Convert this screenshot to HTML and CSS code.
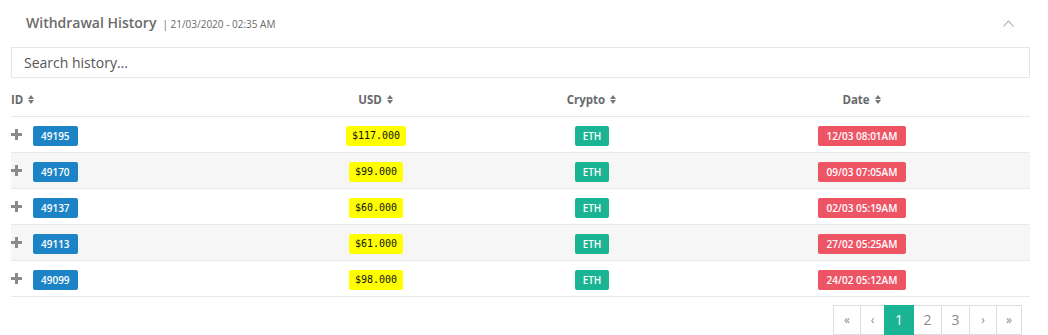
FILE: index.html
```html
<!DOCTYPE html>
<html>
<head>
<meta charset="utf-8">
<link rel="stylesheet" href="styles.css">
</head>
<body>
<div class="ibox">
  <div class="ibox-title">
    <h5>Withdrawal History</h5>
    <small>| 21/03/2020 - 02:35 AM</small>
    <span class="collapse">
      <svg width="11" height="7" viewBox="0 0 11 7"><polyline points="0.5,6.5 5.5,1 10.5,6.5" fill="none" stroke="#a8a8a8" stroke-width="1.1"/></svg>
    </span>
  </div>
  <div class="ibox-content">
    <input class="search" type="text" placeholder="Search history...">
    <div class="table">
      <div class="row head">
        <div class="cell c-id">ID <span class="sort"></span></div>
        <div class="cell c-mid">USD <span class="sort"></span></div>
        <div class="cell c-mid">Crypto <span class="sort"></span></div>
        <div class="cell c-mid">Date <span class="sort"></span></div>
      </div>
      <div class="row">
        <div class="cell c-id"><span class="plus"></span><span class="badge b-blue">49195</span></div>
        <div class="cell c-mid"><span class="badge b-yellow">$117.000</span></div>
        <div class="cell c-mid"><span class="badge b-green">ETH</span></div>
        <div class="cell c-mid"><span class="badge b-red">12/03 08:01AM</span></div>
      </div>
      <div class="row striped">
        <div class="cell c-id"><span class="plus"></span><span class="badge b-blue">49170</span></div>
        <div class="cell c-mid"><span class="badge b-yellow">$99.000</span></div>
        <div class="cell c-mid"><span class="badge b-green">ETH</span></div>
        <div class="cell c-mid"><span class="badge b-red">09/03 07:05AM</span></div>
      </div>
      <div class="row">
        <div class="cell c-id"><span class="plus"></span><span class="badge b-blue">49137</span></div>
        <div class="cell c-mid"><span class="badge b-yellow">$60.000</span></div>
        <div class="cell c-mid"><span class="badge b-green">ETH</span></div>
        <div class="cell c-mid"><span class="badge b-red">02/03 05:19AM</span></div>
      </div>
      <div class="row striped">
        <div class="cell c-id"><span class="plus"></span><span class="badge b-blue">49113</span></div>
        <div class="cell c-mid"><span class="badge b-yellow">$61.000</span></div>
        <div class="cell c-mid"><span class="badge b-green">ETH</span></div>
        <div class="cell c-mid"><span class="badge b-red">27/02 05:25AM</span></div>
      </div>
      <div class="row">
        <div class="cell c-id"><span class="plus"></span><span class="badge b-blue">49099</span></div>
        <div class="cell c-mid"><span class="badge b-yellow">$98.000</span></div>
        <div class="cell c-mid"><span class="badge b-green">ETH</span></div>
        <div class="cell c-mid"><span class="badge b-red">24/02 05:12AM</span></div>
      </div>
    </div>
    <div class="pager">
      <ul class="pagination">
        <li>«</li>
        <li>‹</li>
        <li class="active">1</li>
        <li>2</li>
        <li>3</li>
        <li>›</li>
        <li>»</li>
      </ul>
    </div>
  </div>
</div>
</body>
</html>
```

FILE: styles.css
```css
* { box-sizing: border-box; }
html, body { margin: 0; padding: 0; background: #fff; }
body { font-family: "Open Sans", "Liberation Sans", sans-serif; color: #676a6c; }

.ibox-title {
  height: 47px;
  padding: 14px 0 0 26px;
  display: flex;
  align-items: baseline;
  position: relative;
}
.ibox-title h5 {
  margin: 0;
  font-size: 14px;
  font-weight: 600;
  color: #6b6b6b;
  line-height: 18px;
}
.ibox-title small {
  margin-left: 6px;
  font-size: 10px;
  color: #676a6c;
}
.collapse {
  position: absolute;
  right: 34px;
  top: 20px;
  display: block;
  line-height: 0;
}
.collapse svg { display: block; }

.ibox-content { padding: 0 18px 0 11px; }

.search {
  display: block;
  width: 100%;
  height: 31px;
  border: 1px solid #e5e6e7;
  padding: 0 12px;
  font-family: "Open Sans", sans-serif;
  font-size: 14px;
  color: #676a6c;
  outline: none;
}
.search::placeholder { color: #555; }

.row {
  display: grid;
  grid-template-columns: 251px 228px 204px 1fr;
  height: 36px;
  border-bottom: 1px solid #e7eaec;
  align-items: center;
}
.row.head {
  height: 39px;
  align-items: start;
  padding-top: 14px;
  font-weight: 700;
  font-size: 11.5px;
  color: #676a6c;
}
.row.striped { background: #f6f6f6; }

.cell { display: flex; align-items: center; }
.c-mid { justify-content: center; }

.sort {
  display: inline-block;
  width: 7px;
  height: 9px;
  margin-left: 5px;
  position: relative;
}
.sort::before, .sort::after {
  content: "";
  position: absolute;
  left: 0;
  border-left: 3.5px solid transparent;
  border-right: 3.5px solid transparent;
}
.sort::before { top: 0; border-bottom: 4px solid #777; }
.sort::after { bottom: 0; border-top: 4px solid #777; }

.plus {
  width: 11px;
  height: 11px;
  position: relative;
  margin-right: 11px;
  margin-top: 0;
}
.plus::before, .plus::after {
  content: "";
  position: absolute;
  background: #8a8a8a;
}
.plus::before { left: 4px; top: 0; width: 3px; height: 11px; }
.plus::after { left: 0; top: 4px; width: 11px; height: 3px; }

.badge {
  display: inline-block;
  height: 20px;
  line-height: 20px;
  padding: 0 8px;
  margin-top: 2px;
  border-radius: 2px;
  font-size: 10px;
  font-weight: 600;
  color: #fff;
  white-space: nowrap;
}
.b-blue { background: #1c84c6; }
.b-green { background: #1ab394; }
.b-red { background: #ed5565; padding: 0 9px; }
.b-yellow {
  background: #ffff00;
  color: #111;
  font-family: "DejaVu Sans Mono", monospace;
  font-size: 10px;
  font-weight: 400;
  padding: 0 6px;
}

.pager {
  display: flex;
  justify-content: flex-end;
  margin-top: 8px;
  padding-right: 8px;
}
.pagination {
  list-style: none;
  margin: 0;
  padding: 0;
  display: flex;
}
.pagination li {
  height: 30px;
  line-height: 28px;
  border: 1px solid #ddd;
  margin-left: -1px;
  padding: 0;
  font-size: 12px;
  color: #8a8a8a;
  text-align: center;
  background: #fff;
}
.pagination li:nth-child(1) { width: 28px; }
.pagination li:nth-child(2) { width: 25px; }
.pagination li:nth-child(3) { width: 30px; }
.pagination li:nth-child(4) { width: 29px; }
.pagination li:nth-child(5) { width: 29px; }
.pagination li:nth-child(6) { width: 28px; }
.pagination li:nth-child(7) { width: 26px; }
.pagination li.active {
  background: #1ab394;
  border-color: #1ab394;
  color: #fff;
  position: relative;
}
.pagination li:nth-child(3), .pagination li:nth-child(4), .pagination li:nth-child(5) { font-size: 14px; }
```
